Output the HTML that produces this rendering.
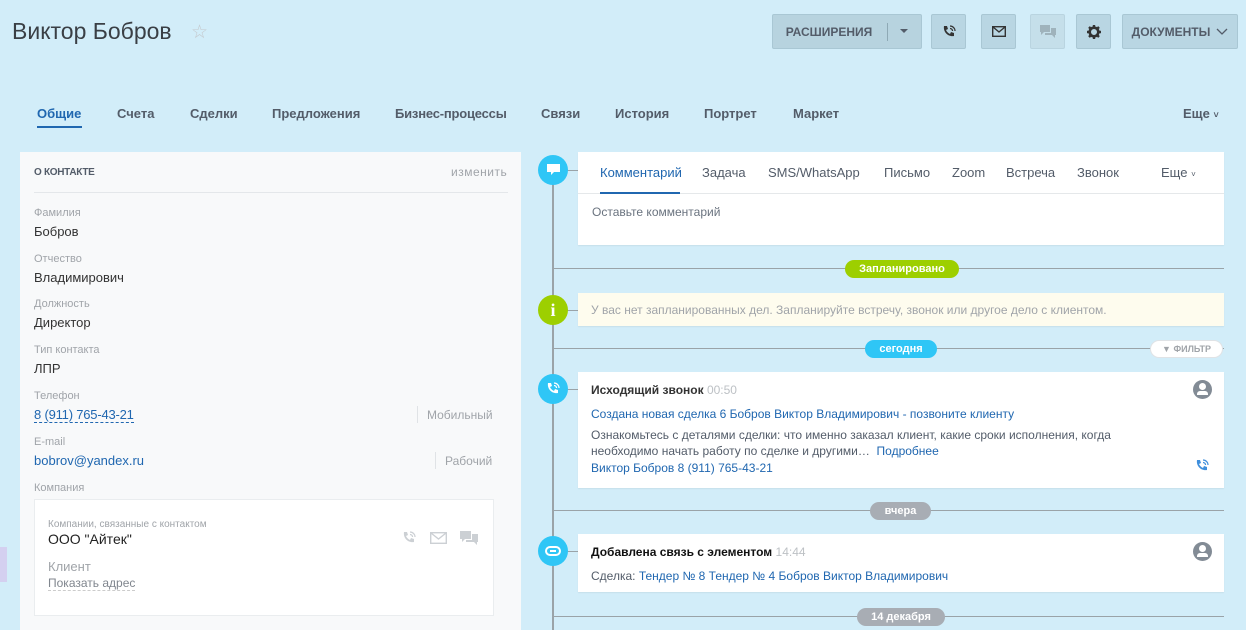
<!DOCTYPE html>
<html><head><meta charset="utf-8">
<style>
*{box-sizing:border-box;margin:0;padding:0}
body{width:1246px;height:630px;overflow:hidden;background:#d2edf9;font-family:"Liberation Sans",Arial,sans-serif;position:relative;color:#333}
.a{position:absolute}
.btn{position:absolute;top:14px;height:35px;background:#b9d6e3;border:1px solid #a9c7d4;border-radius:2px;display:flex;align-items:center;justify-content:center;font-size:12px;font-weight:bold;color:#535c69}
.tab{position:absolute;top:106px;font-size:13px;font-weight:bold;color:#535c69}
.lbl{position:absolute;left:34px;font-size:11px;color:#a0a4a9}
.val{position:absolute;left:34px;font-size:13px;color:#333}
.card{position:absolute;left:578px;width:646px;background:#fff;box-shadow:0 1px 1px rgba(0,0,0,.06)}
.circ{position:absolute;left:538px;width:30px;height:30px;border-radius:50%;display:flex;align-items:center;justify-content:center}
.hl{position:absolute;left:553px;height:1px;background:#9aa3a8}
.badge{position:absolute;height:18px;border-radius:9px;color:#fff;font-size:11px;font-weight:bold;display:flex;align-items:center;justify-content:center}
.link{color:#2067b0}
</style></head><body>
<div class="a" style="left:12px;top:18px;font-size:23px;color:#3a3f45">Виктор Бобров</div>
<div class="a" style="left:191px;top:21px;font-size:19px;color:#c4c8cc">☆</div>

<div class="btn" style="left:772px;width:150px;background:#b7d3df"><span style="margin-right:36px">РАСШИРЕНИЯ</span><span class="a" style="left:114px;top:8px;width:1px;height:18px;background:#8ea9b5"></span><span class="a" style="left:127px;top:14px;border:4px solid transparent;border-top:4px solid #535c69"></span></div>
<div class="btn" style="left:931px;width:35px"><svg width="16" height="16" viewBox="0 0 16 16"><path d="M3 2l3 0 1 3-2 1c1 2 2 3 4 4l1-2 3 1 0 3c-6 1-11-4-10-10z" fill="#333"/><path d="M9 2a5 5 0 0 1 5 5M9 4.5a2.5 2.5 0 0 1 2.5 2.5" stroke="#333" fill="none" stroke-width="1.2"/></svg></div>
<div class="btn" style="left:981px;width:35px"><svg width="14" height="11"><rect x=".7" y=".7" width="12.6" height="9.6" fill="none" stroke="#333" stroke-width="1.4"/><path d="M1 1l6 5 6-5" fill="none" stroke="#333" stroke-width="1.4"/></svg></div>
<div class="btn" style="left:1030px;width:35px;background:#c5dfea;border-color:#b9d4e0"><svg width="16" height="13"><path d="M0 0h10v7H4l-3 3V7H0z" fill="#9fb3bc"/><path d="M11 3h5v7h-1v3l-3-3H5V8h6z" fill="#9fb3bc"/></svg></div>
<div class="btn" style="left:1076px;width:35px"><svg width="14" height="14" viewBox="0 0 14 14"><circle cx="7" cy="7" r="4.3" fill="none" stroke="#333" stroke-width="2.6"/><g stroke="#333" stroke-width="2.4"><path d="M7 0v3M7 11v3M0 7h3M11 7h3M2 2l2 2M10 10l2 2M12 2l-2 2M2 12l2-2"/></g></svg></div>
<div class="btn" style="left:1122px;width:116px">ДОКУМЕНТЫ <svg width="12" height="8" style="margin-left:6px"><path d="M1 1l5 5 5-5" fill="none" stroke="#535c69" stroke-width="1.3"/></svg></div>

<div class="tab" style="left:37px;color:#2067b0">Общие</div>
<div class="a" style="left:37px;top:126px;width:45px;height:2px;background:#2067b0"></div>
<div class="tab" style="left:117px">Счета</div>
<div class="tab" style="left:190px">Сделки</div>
<div class="tab" style="left:272px">Предложения</div>
<div class="tab" style="left:395px;letter-spacing:-.2px">Бизнес-процессы</div>
<div class="tab" style="left:541px">Связи</div>
<div class="tab" style="left:615px">История</div>
<div class="tab" style="left:704px">Портрет</div>
<div class="tab" style="left:793px">Маркет</div>
<div class="tab" style="left:1183px">Еще <span style="font-size:9px">˅</span></div>

<!-- left panel -->
<div class="a" style="left:20px;top:152px;width:501px;height:478px;background:#f8f9fa"></div>
<div class="a" style="left:0;top:547px;width:7px;height:35px;background:#d4d0f0"></div>
<div class="a" style="left:34px;top:167px;font-size:10px;font-weight:bold;color:#535c69;letter-spacing:-.3px">О КОНТАКТЕ</div>
<div class="a" style="left:451px;top:165px;font-size:12px;color:#a0a4a9;letter-spacing:.5px">изменить</div>
<div class="a" style="left:34px;top:192px;width:474px;height:1px;background:#e4e7ea"></div>
<div class="lbl" style="top:207px">Фамилия</div><div class="val" style="top:224px">Бобров</div>
<div class="lbl" style="top:253px">Отчество</div><div class="val" style="top:270px">Владимирович</div>
<div class="lbl" style="top:298px">Должность</div><div class="val" style="top:315px">Директор</div>
<div class="lbl" style="top:344px">Тип контакта</div><div class="val" style="top:361px">ЛПР</div>
<div class="lbl" style="top:390px">Телефон</div><div class="val link" style="top:407px;border-bottom:1px dashed #2067b0;letter-spacing:-.2px">8 (911) 765-43-21</div>
<div class="a" style="left:417px;top:406px;width:1px;height:17px;background:#e0e3e6"></div>
<div class="a" style="left:427px;top:408px;font-size:12px;color:#a0a4a9">Мобильный</div>
<div class="lbl" style="top:436px">E-mail</div><div class="val link" style="top:453px">bobrov@yandex.ru</div>
<div class="a" style="left:435px;top:452px;width:1px;height:17px;background:#e0e3e6"></div>
<div class="a" style="left:445px;top:454px;font-size:12px;color:#a0a4a9">Рабочий</div>
<div class="lbl" style="top:482px">Компания</div>
<div class="a" style="left:34px;top:499px;width:460px;height:117px;background:#fff;border:1px solid #eaedef"></div>
<div class="a" style="left:48px;top:519px;font-size:10px;color:#a0a4a9">Компании, связанные с контактом</div>
<div class="a" style="left:48px;top:531px;font-size:14px;color:#222">ООО "Айтек"</div>
<div class="a" style="left:48px;top:559px;font-size:13px;color:#a0a4a9">Клиент</div>
<div class="a" style="left:48px;top:576px;font-size:12px;color:#80868e;border-bottom:1px dashed #ccc">Показать адрес</div>
<svg class="a" style="left:401px;top:530px" width="16" height="16" viewBox="0 0 16 16"><path d="M3 2l3 0 1 3-2 1c1 2 2 3 4 4l1-2 3 1 0 3c-6 1-11-4-10-10z" fill="#ccd0d4"/><path d="M9 2a5 5 0 0 1 5 5M9 4.5a2.5 2.5 0 0 1 2.5 2.5" stroke="#ccd0d4" fill="none" stroke-width="1.2"/></svg>
<svg class="a" style="left:430px;top:532px" width="17" height="12"><rect x=".7" y=".7" width="15.6" height="10.6" fill="none" stroke="#ccd0d4" stroke-width="1.4"/><path d="M1 1l7.5 6 7.5-6" fill="none" stroke="#ccd0d4" stroke-width="1.4"/></svg>
<svg class="a" style="left:460px;top:531px" width="18" height="15"><path d="M0 0h11v8H5l-3 3V8H0z" fill="#ccd0d4"/><path d="M12 3h6v8h-1v3l-3-3H6V9h6z" fill="#ccd0d4"/></svg>

<!-- timeline -->
<div class="a" style="left:552px;top:170px;width:2px;height:460px;background:#9aa3a8"></div>
<div class="hl" style="top:170px;width:25px"></div>
<div class="circ" style="top:155px;background:#2fc6f6"><svg width="13" height="12"><path d="M0 0h13v8H7l-3 3V8H0z" fill="#fff"/></svg></div>
<div class="card" style="top:152px;height:93px"></div>
<div class="a" style="left:578px;top:193px;width:646px;height:1px;background:#e5e8ea"></div>
<div class="a" style="left:600px;top:165px;font-size:13px;color:#2067b0">Комментарий</div>
<div class="a" style="left:600px;top:192px;width:80px;height:2px;background:#2067b0"></div>
<div class="a" style="left:702px;top:165px;font-size:13px;color:#535c69">Задача</div>
<div class="a" style="left:768px;top:165px;font-size:13px;color:#535c69">SMS/WhatsApp</div>
<div class="a" style="left:884px;top:165px;font-size:13px;color:#535c69">Письмо</div>
<div class="a" style="left:952px;top:165px;font-size:13px;color:#535c69">Zoom</div>
<div class="a" style="left:1006px;top:165px;font-size:13px;color:#535c69">Встреча</div>
<div class="a" style="left:1077px;top:165px;font-size:13px;color:#535c69">Звонок</div>
<div class="a" style="left:1161px;top:165px;font-size:13px;color:#535c69">Еще <span style="font-size:8px">˅</span></div>
<div class="a" style="left:592px;top:205px;font-size:12px;color:#6a737f">Оставьте комментарий</div>

<div class="hl" style="top:268px;width:671px"></div>
<div class="badge" style="left:845px;top:260px;width:114px;background:#9dcf00">Запланировано</div>

<div class="hl" style="top:310px;width:25px"></div>
<div class="circ" style="top:295px;background:#9dcf00;color:#fff;font-weight:bold;font-family:'Liberation Serif',serif;font-size:18px">i</div>
<div class="card" style="top:293px;height:33px;background:#fefcee"></div>
<div class="a" style="left:591px;top:303px;font-size:12px;color:#a0a4a9">У вас нет запланированных дел. Запланируйте встречу, звонок или другое дело с клиентом.</div>

<div class="hl" style="top:348px;width:671px"></div>
<div class="badge" style="left:865px;top:340px;width:72px;background:#2fc6f6">сегодня</div>
<div class="badge" style="left:1150px;top:340px;width:73px;background:#fff;color:#a0a4a9;font-size:9px;border:1px solid #e0e3e6">▼ ФИЛЬТР</div>

<div class="hl" style="top:389px;width:25px"></div>
<div class="circ" style="top:374px;background:#2fc6f6"><svg width="16" height="16" viewBox="0 0 16 16"><path d="M3 2l3 0 1 3-2 1c1 2 2 3 4 4l1-2 3 1 0 3c-6 1-11-4-10-10z" fill="#fff"/><path d="M9 2a5 5 0 0 1 5 5M9 4.5a2.5 2.5 0 0 1 2.5 2.5" stroke="#fff" fill="none" stroke-width="1.2"/></svg></div>
<div class="card" style="top:372px;height:116px"></div>
<div class="a" style="left:591px;top:383px;font-size:12px;font-weight:bold;color:#333">Исходящий звонок <span style="font-weight:normal;color:#bdc1c5">00:50</span></div>
<div class="a" style="left:1193px;top:380px;width:19px;height:19px;border-radius:50%;background:#828b95"></div>
<div class="a" style="left:1199px;top:383px;width:7px;height:7px;border-radius:50%;background:#fff"></div>
<div class="a" style="left:1197px;top:391px;width:11px;height:4px;border-radius:3px 3px 0 0;background:#fff"></div>
<div class="a link" style="left:591px;top:407px;font-size:12px">Создана новая сделка 6 Бобров Виктор Владимирович - позвоните клиенту</div>
<div class="a" style="left:591px;top:427px;font-size:12px;line-height:16px;color:#535c69;width:560px">Ознакомьтесь с деталями сделки: что именно заказал клиент, какие сроки исполнения, когда необходимо начать работу по сделке и другими… &nbsp;<span class="link">Подробнее</span></div>
<div class="a link" style="left:591px;top:461px;font-size:12px">Виктор Бобров 8 (911) 765-43-21</div>
<svg class="a" style="left:1194px;top:458px" width="16" height="16" viewBox="0 0 16 16"><path d="M3 2l3 0 1 3-2 1c1 2 2 3 4 4l1-2 3 1 0 3c-6 1-11-4-10-10z" fill="#3f8fdc"/><path d="M9 2a5 5 0 0 1 5 5M9 4.5a2.5 2.5 0 0 1 2.5 2.5" stroke="#3f8fdc" fill="none" stroke-width="1.2"/></svg>

<div class="hl" style="top:510px;width:671px"></div>
<div class="badge" style="left:870px;top:502px;width:61px;background:#a8adb4">вчера</div>

<div class="hl" style="top:551px;width:25px"></div>
<div class="circ" style="top:536px;background:#2fc6f6"><svg width="16" height="10"><rect x="1" y="1" width="14" height="8" rx="4" fill="none" stroke="#fff" stroke-width="2"/><path d="M5 5h6" stroke="#fff" stroke-width="2"/></svg></div>
<div class="card" style="top:534px;height:58px"></div>
<div class="a" style="left:591px;top:545px;font-size:12px;font-weight:bold;color:#111">Добавлена связь с элементом <span style="font-weight:normal;color:#bdc1c5">14:44</span></div>
<div class="a" style="left:1193px;top:542px;width:19px;height:19px;border-radius:50%;background:#828b95"></div>
<div class="a" style="left:1199px;top:545px;width:7px;height:7px;border-radius:50%;background:#fff"></div>
<div class="a" style="left:1197px;top:553px;width:11px;height:4px;border-radius:3px 3px 0 0;background:#fff"></div>
<div class="a" style="left:591px;top:569px;font-size:12px;color:#535c69">Сделка: <span class="link">Тендер № 8 Тендер № 4 Бобров Виктор Владимирович</span></div>

<div class="hl" style="top:616px;width:671px"></div>
<div class="badge" style="left:857px;top:608px;width:88px;background:#a8adb4">14 декабря</div>
</body></html>
